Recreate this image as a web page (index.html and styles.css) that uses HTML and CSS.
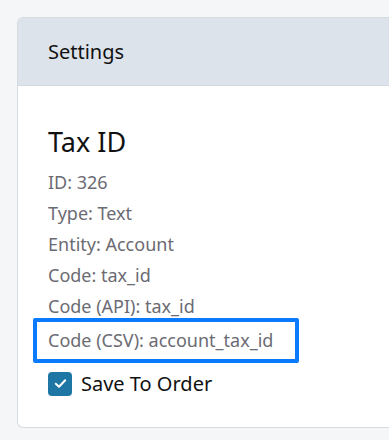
FILE: index.html
```html
<!DOCTYPE html>
<html>
<head>
    <meta charset="UTF-8" />
    <meta name="viewport" content="width=device-width, initial-scale=1.0">
    <title>Settings</title>
    <link rel="stylesheet" href="styles.css">
</head>

<body>
    <div class="settings-card">
        <div class="card-header">Settings</div>
        <div class="card-body">
            <div class="field-title">Tax ID</div>
            <div class="field-info">
                <div class="info-row">ID: 326</div>
                <div class="info-row">Type: Text</div>
                <div class="info-row">Entity: Account</div>
                <div class="info-row">Code: tax_id</div>
                <div class="info-row">Code (API): tax_id</div>
                <div class="info-row highlight">Code (CSV): account_tax_id</div>
            </div>
            <label class="check-row">
                <input type="checkbox" checked>
                <span class="check-box">
                    <svg width="13" height="11" viewBox="0 0 13 11">
                        <path d="M1.8 5.8 L5 8.8 L11.2 2.2" fill="none" stroke="#fff" stroke-width="2" stroke-linecap="round" stroke-linejoin="round"/>
                    </svg>
                </span>
                <span class="check-label">Save To Order</span>
            </label>
        </div>
    </div>
</body>
</html>
```

FILE: styles.css
```css
* {
    margin: 0;
    padding: 0;
    box-sizing: border-box;
    font-family: "Noto Sans", "Open Sans", sans-serif;
}

body {
    background-color: #f5f6f8;
    overflow: hidden;
    padding: 17px 0 0 17px;
}

/* card runs off the right side of the frame, so no right border */
.settings-card {
    height: 411px;
    background-color: #fff;
    border: 1px solid #d6dbe2;
    border-right: none;
    border-radius: 6px 0 0 6px;
    overflow: hidden;
}

.card-header {
    background-color: #dde3ea;
    border-bottom: 1px solid #d2d8e0;
    padding: 0 30px;
    height: 68px;
    display: flex;
    align-items: center;
    font-size: 20px;
    color: #111;
}

.card-body {
    padding: 37px 30px 0;
}

.field-title {
    font-size: 27px;
    line-height: 38px;
    color: #111;
    margin-bottom: 6px;
}

.info-row {
    font-size: 18px;
    line-height: 31px;
    color: #6b6b73;
}

.info-row.highlight {
    display: inline-block;
    margin: -4px 0 0 -15px;
    padding: 0 22px 0 11px;
    border: 4px solid #0a7bff;
    border-radius: 2px;
    line-height: 37px;
}

.check-row {
    display: flex;
    align-items: center;
    gap: 9px;
    margin-top: 7px;
    cursor: pointer;
}

.check-row input {
    display: none;
}

.check-box {
    width: 24px;
    height: 24px;
    border-radius: 4px;
    background-color: #1d76a3;
    display: flex;
    align-items: center;
    justify-content: center;
}

.check-label {
    font-size: 20px;
    color: #111;
}
```
